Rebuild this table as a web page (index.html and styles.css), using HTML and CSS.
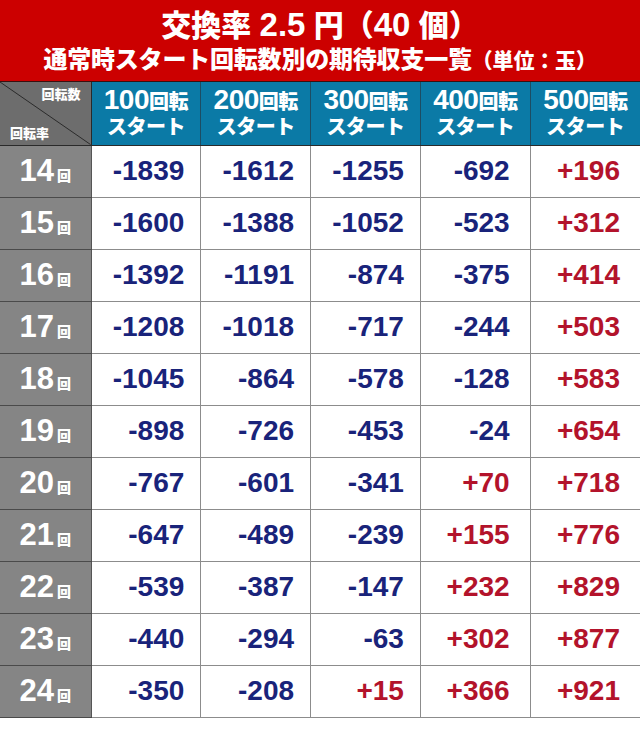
FILE: index.html
```html
<!DOCTYPE html>
<html lang="ja">
<head>
<meta charset="utf-8">
<link rel="stylesheet" href="styles.css">
</head>
<body>
<div class="sheet">
  <header class="title">
    <div class="t1">交換率 <span class="dg">2.5</span> 円（<span class="dg">40</span> 個）</div>
    <div class="t2">通常時スタート回転数別の期待収支一覧<span class="unit">（単位：玉）</span></div>
  </header>
  <table class="grid">
    <colgroup>
      <col class="c0"><col><col><col><col><col>
    </colgroup>
    <thead>
      <tr class="hrow">
        <th class="corner">
          <svg class="diag" viewBox="0 0 91 63" preserveAspectRatio="none"><line x1="0" y1="0" x2="91" y2="63" stroke="#2a2a2a" stroke-width="1"/></svg>
          <span class="ck1">回転数</span>
          <span class="ck2">回転率</span>
        </th>
        <th class="ch"><span class="n">100</span>回転<br>スタート</th>
        <th class="ch"><span class="n">200</span>回転<br>スタート</th>
        <th class="ch"><span class="n">300</span>回転<br>スタート</th>
        <th class="ch"><span class="n">400</span>回転<br>スタート</th>
        <th class="ch"><span class="n">500</span>回転<br>スタート</th>
      </tr>
    </thead>
    <tbody>
      <tr><th class="rh">14<span class="kai">回</span></th><td class="m">-1839</td><td class="m">-1612</td><td class="m">-1255</td><td class="m w">-692</td><td class="p w">+196</td></tr>
      <tr><th class="rh">15<span class="kai">回</span></th><td class="m">-1600</td><td class="m">-1388</td><td class="m">-1052</td><td class="m w">-523</td><td class="p w">+312</td></tr>
      <tr><th class="rh">16<span class="kai">回</span></th><td class="m">-1392</td><td class="m">-1191</td><td class="m">-874</td><td class="m w">-375</td><td class="p w">+414</td></tr>
      <tr><th class="rh">17<span class="kai">回</span></th><td class="m">-1208</td><td class="m">-1018</td><td class="m">-717</td><td class="m w">-244</td><td class="p w">+503</td></tr>
      <tr><th class="rh">18<span class="kai">回</span></th><td class="m">-1045</td><td class="m">-864</td><td class="m">-578</td><td class="m w">-128</td><td class="p w">+583</td></tr>
      <tr><th class="rh">19<span class="kai">回</span></th><td class="m">-898</td><td class="m">-726</td><td class="m">-453</td><td class="m w">-24</td><td class="p w">+654</td></tr>
      <tr><th class="rh">20<span class="kai">回</span></th><td class="m">-767</td><td class="m">-601</td><td class="m">-341</td><td class="p w">+70</td><td class="p w">+718</td></tr>
      <tr><th class="rh">21<span class="kai">回</span></th><td class="m">-647</td><td class="m">-489</td><td class="m">-239</td><td class="p w">+155</td><td class="p w">+776</td></tr>
      <tr><th class="rh">22<span class="kai">回</span></th><td class="m">-539</td><td class="m">-387</td><td class="m">-147</td><td class="p w">+232</td><td class="p w">+829</td></tr>
      <tr><th class="rh">23<span class="kai">回</span></th><td class="m">-440</td><td class="m">-294</td><td class="m">-63</td><td class="p w">+302</td><td class="p w">+877</td></tr>
      <tr><th class="rh">24<span class="kai">回</span></th><td class="m">-350</td><td class="m">-208</td><td class="p">+15</td><td class="p w">+366</td><td class="p w">+921</td></tr>
    </tbody>
  </table>
</div>
</body>
</html>
```
FILE: styles.css
```css
html, body {
  margin: 0;
  padding: 0;
  background: #ffffff;
}
body {
  font-family: "Liberation Sans", "Noto Sans CJK JP", sans-serif;
  font-weight: 700;
}
.sheet {
  width: 640px;
}
.title {
  height: 82px;
  background: #cc0000;
  border-bottom: 1px solid #3a1010;
  color: #ffffff;
  text-align: center;
  box-sizing: border-box;
  padding-top: 5px;
  font-weight: 900;
}
.t1 {
  font-size: 30px;
  line-height: 40px;
  height: 40px;
}
.t1 .dg {
  font-size: 33px;
  font-weight: 700;
}
.t2 {
  font-size: 24px;
  line-height: 30px;
  letter-spacing: -0.2px;
}
.unit {
  font-size: 21px;
}
.grid {
  width: 640px;
  border-collapse: collapse;
  table-layout: fixed;
}
.c0 {
  width: 91px;
}
.grid th, .grid td {
  padding: 0;
}
.hrow {
  height: 63px;
}
.grid tbody tr {
  height: 52px;
}
.corner {
  position: relative;
  background: #6d6d6d;
  border-right: 1px solid #2a2a2a;
  border-bottom: 1px solid #2a2a2a;
  color: #ffffff;
  font-size: 13px;
  font-family: "Noto Sans CJK JP", sans-serif;
  font-weight: 900;
}
.diag {
  position: absolute;
  left: 0;
  top: 0;
  width: 100%;
  height: 100%;
}
.ck1 {
  position: absolute;
  right: 10px;
  top: 3px;
  line-height: 18px;
}
.ck2 {
  position: absolute;
  left: 10px;
  bottom: 3px;
  line-height: 18px;
}
.ch {
  background: #0b7aa6;
  color: #ffffff;
  border-left: 1px solid #1d4d63;
  border-bottom: 1px solid #2a2a2a;
  font-size: 20px;
  line-height: 25px;
  letter-spacing: -0.5px;
  vertical-align: middle;
  padding-top: 2px;
  font-weight: 900;
}
.ch .n {
  font-size: 28px;
  font-weight: 700;
  letter-spacing: -0.5px;
}
.rh {
  background: #858585;
  color: #ffffff;
  border-right: 1px solid #555555;
  border-bottom: 1px solid #4a4a4a;
  font-size: 31px;
  text-align: center;
  padding-left: 2px;
}
.kai {
  font-size: 14px;
  font-family: "Noto Sans CJK JP", sans-serif;
  font-weight: 900;
  margin-left: 3px;
}
.grid td {
  border-left: 1px solid #8c8c8c;
  border-bottom: 1px solid #8c8c8c;
  text-align: right;
  padding-right: 16px;
  font-size: 28px;
}
.grid td.w {
  padding-right: 20px;
}
.grid td.m {
  color: #19237a;
}
.grid td.p {
  color: #b3132b;
}
```
